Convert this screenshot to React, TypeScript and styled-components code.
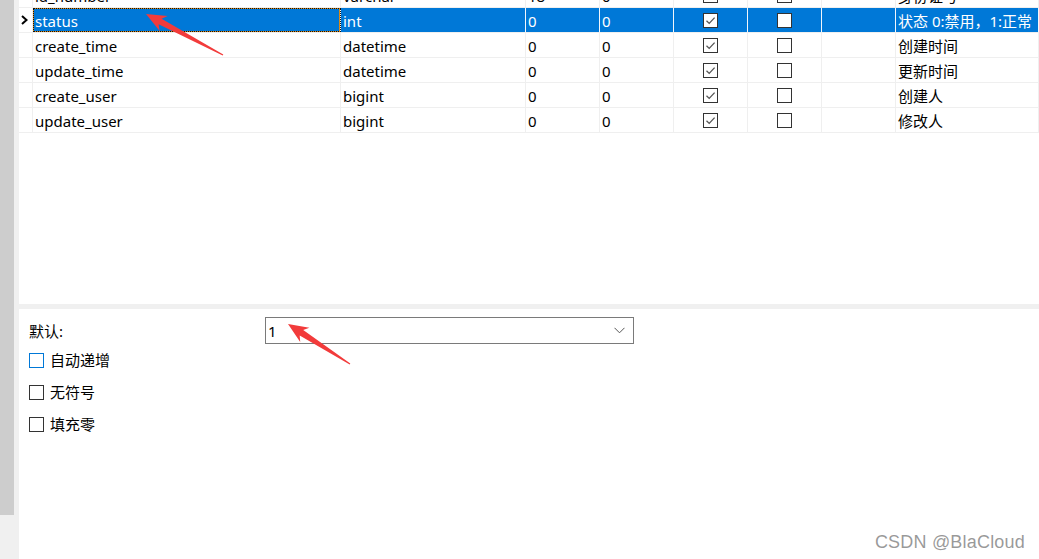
import React from "react";
import styled, { createGlobalStyle } from "styled-components";

const Global = createGlobalStyle`
  html, body { margin: 0; padding: 0; background: #ffffff; }
  body { font-family: "Noto Sans", "Noto Sans CJK SC", sans-serif; font-size: 15px; color: #000; }
  * { box-sizing: border-box; }
`;

const Page = styled.div`
  position: relative;
  width: 1039px;
  height: 559px;
  display: flex;
  overflow: hidden;
  background: #fff;
`;

const Rail = styled.div`
  width: 19px;
  flex: none;
  background: #f0f0f0;
  display: flex;
  flex-direction: column;
`;

const RailThumb = styled.div`
  width: 14px;
  height: 515px;
  background: #cdcdcd;
`;

const Main = styled.div`
  flex: 1;
  display: flex;
  flex-direction: column;
  min-width: 0;
`;

const GridArea = styled.div`
  height: 304px;
  flex: none;
  overflow: hidden;
  background: #fff;
`;

const GridInner = styled.div`
  margin-top: -17px;
`;

const Row = styled.div`
  display: grid;
  grid-template-columns: 14px 308px 185px 74px 74px 74px 74px 74px 1fr;
  height: 25px;
  border-bottom: 1px solid #efefef;
`;

const HeaderCell = styled.div`
  border-right: 1px solid #efefef;
  background: #fff;
  display: flex;
  align-items: center;
  justify-content: center;
  padding-right: 3px;
`;

const Cell = styled.div<{ $sel?: boolean; $focus?: boolean; $center?: boolean }>`
  position: relative;
  border-right: 1px solid ${(p) => (p.$sel ? "#f2f6fb" : "#efefef")};
  background: ${(p) => (p.$sel ? "#0078d7" : "#fff")};
  color: ${(p) => (p.$sel ? "#fff" : "#000")};
  display: flex;
  align-items: center;
  justify-content: ${(p) => (p.$center ? "center" : "flex-start")};
  padding-left: ${(p) => (p.$center ? "0" : "2px")};
  padding-top: ${(p) => (p.$center ? "0" : "2px")};
  white-space: nowrap;
  overflow: hidden;
  line-height: 1;
  ${(p) =>
    p.$focus
      ? `box-shadow: inset 0 0 0 1px #d98a1a; outline: 1px dotted #111; outline-offset: -1px;`
      : ""}
`;

const Box = styled.div<{ $accent?: boolean }>`
  width: 15px;
  height: 15px;
  flex: none;
  border: 1px solid ${(p) => (p.$accent ? "#0078d7" : "#333")};
  background: #fff;
  display: flex;
  align-items: center;
  justify-content: center;
`;

const Separator = styled.div`
  height: 5px;
  flex: none;
  background: #f0f0f0;
`;

const Panel = styled.div`
  flex: 1;
  background: #fff;
  padding: 8px 0 0 10px;
  display: flex;
  flex-direction: column;
`;

const DefaultRow = styled.div`
  display: flex;
  align-items: center;
  height: 27px;
`;

const Label = styled.span`
  width: 236px;
  flex: none;
`;

const Combo = styled.div`
  width: 369px;
  height: 27px;
  border: 1px solid #7a7a7a;
  display: flex;
  align-items: center;
  justify-content: space-between;
  padding: 0 8px 0 2px;
  background: #fff;
`;

const ComboValue = styled.span`
  color: #000;
`;

const CheckList = styled.div`
  display: flex;
  flex-direction: column;
  gap: 17px;
  margin-top: 9px;
`;

const CheckRow = styled.label`
  display: flex;
  align-items: center;
  gap: 6px;
  height: 15px;
  line-height: 1;
`;

const Watermark = styled.div`
  position: absolute;
  right: 14px;
  bottom: 6px;
  font-family: "Liberation Sans", Arial, sans-serif;
  font-size: 18px;
  color: rgba(120, 120, 120, 0.75);
  letter-spacing: 0.2px;
`;

const Overlay = styled.svg`
  position: absolute;
  left: 0;
  top: 0;
  pointer-events: none;
`;

const Check = () => (
  <svg width="13" height="13" viewBox="0 0 13 13">
    <path d="M2.5 6.8 L5.2 9.4 L10.6 3.6" fill="none" stroke="#555" strokeWidth="1.3" />
  </svg>
);

const RowMarker = () => (
  <svg width="7" height="10" viewBox="0 0 7 10">
    <path d="M1 1 L5.5 5 L1 9" fill="none" stroke="#000" strokeWidth="2" />
  </svg>
);

const Chevron = () => (
  <svg width="11" height="7" viewBox="0 0 11 7">
    <path d="M0.5 0.8 L5.5 5.8 L10.5 0.8" fill="none" stroke="#555" strokeWidth="1" />
  </svg>
);

type RowData = {
  name: string;
  type: string;
  len: string;
  dec: string;
  notNull: boolean;
  key: boolean;
  comment: string;
  sel?: boolean;
};

const rows: RowData[] = [
  { name: "id_number", type: "varchar", len: "18", dec: "0", notNull: false, key: false, comment: "身份证号" },
  { name: "status", type: "int", len: "0", dec: "0", notNull: true, key: false, comment: "状态 0:禁用，1:正常", sel: true },
  { name: "create_time", type: "datetime", len: "0", dec: "0", notNull: true, key: false, comment: "创建时间" },
  { name: "update_time", type: "datetime", len: "0", dec: "0", notNull: true, key: false, comment: "更新时间" },
  { name: "create_user", type: "bigint", len: "0", dec: "0", notNull: true, key: false, comment: "创建人" },
  { name: "update_user", type: "bigint", len: "0", dec: "0", notNull: true, key: false, comment: "修改人" },
];

function arrowPoints(tx: number, ty: number, ex: number, ey: number) {
  const dx = ex - tx;
  const dy = ey - ty;
  const L = Math.hypot(dx, dy);
  const ux = dx / L;
  const uy = dy / L;
  const px = -uy;
  const py = ux;
  const hl = 20;
  const hw = 8.5;
  const sl = 16;
  const sw = 3.2;
  const pts = [
    [tx, ty],
    [tx + ux * hl + px * hw, ty + uy * hl + py * hw],
    [tx + ux * sl + px * sw, ty + uy * sl + py * sw],
    [ex + px * 0.6, ey + py * 0.6],
    [ex - px * 0.6, ey - py * 0.6],
    [tx + ux * sl - px * sw, ty + uy * sl - py * sw],
    [tx + ux * hl - px * hw, ty + uy * hl - py * hw],
  ];
  return pts.map((p) => p.map((v) => v.toFixed(1)).join(",")).join(" ");
}

export default function App() {
  return (
    <Page>
      <Global />
      <Rail>
        <RailThumb />
      </Rail>
      <Main>
        <GridArea>
          <GridInner>
            {rows.map((r) => (
              <Row key={r.name}>
                <HeaderCell>{r.sel ? <RowMarker /> : null}</HeaderCell>
                <Cell $sel={r.sel} $focus={r.sel}>{r.name}</Cell>
                <Cell $sel={r.sel}>{r.type}</Cell>
                <Cell $sel={r.sel}>{r.len}</Cell>
                <Cell $sel={r.sel}>{r.dec}</Cell>
                <Cell $sel={r.sel} $center>
                  <Box>{r.notNull ? <Check /> : null}</Box>
                </Cell>
                <Cell $sel={r.sel} $center>
                  <Box>{r.key ? <Check /> : null}</Box>
                </Cell>
                <Cell $sel={r.sel} />
                <Cell $sel={r.sel}>{r.comment}</Cell>
              </Row>
            ))}
          </GridInner>
        </GridArea>
        <Separator />
        <Panel>
          <DefaultRow>
            <Label>默认:</Label>
            <Combo>
              <ComboValue>1</ComboValue>
              <Chevron />
            </Combo>
          </DefaultRow>
          <CheckList>
            <CheckRow>
              <Box $accent />
              自动递增
            </CheckRow>
            <CheckRow>
              <Box />
              无符号
            </CheckRow>
            <CheckRow>
              <Box />
              填充零
            </CheckRow>
          </CheckList>
        </Panel>
      </Main>
      <Watermark>CSDN @BlaCloud</Watermark>
      <Overlay width="1039" height="559" viewBox="0 0 1039 559">
        <polygon points={arrowPoints(146, 14, 223, 55)} fill="#f23b3b" />
        <polygon points={arrowPoints(288, 324, 350, 364)} fill="#f23b3b" />
      </Overlay>
    </Page>
  );
}
